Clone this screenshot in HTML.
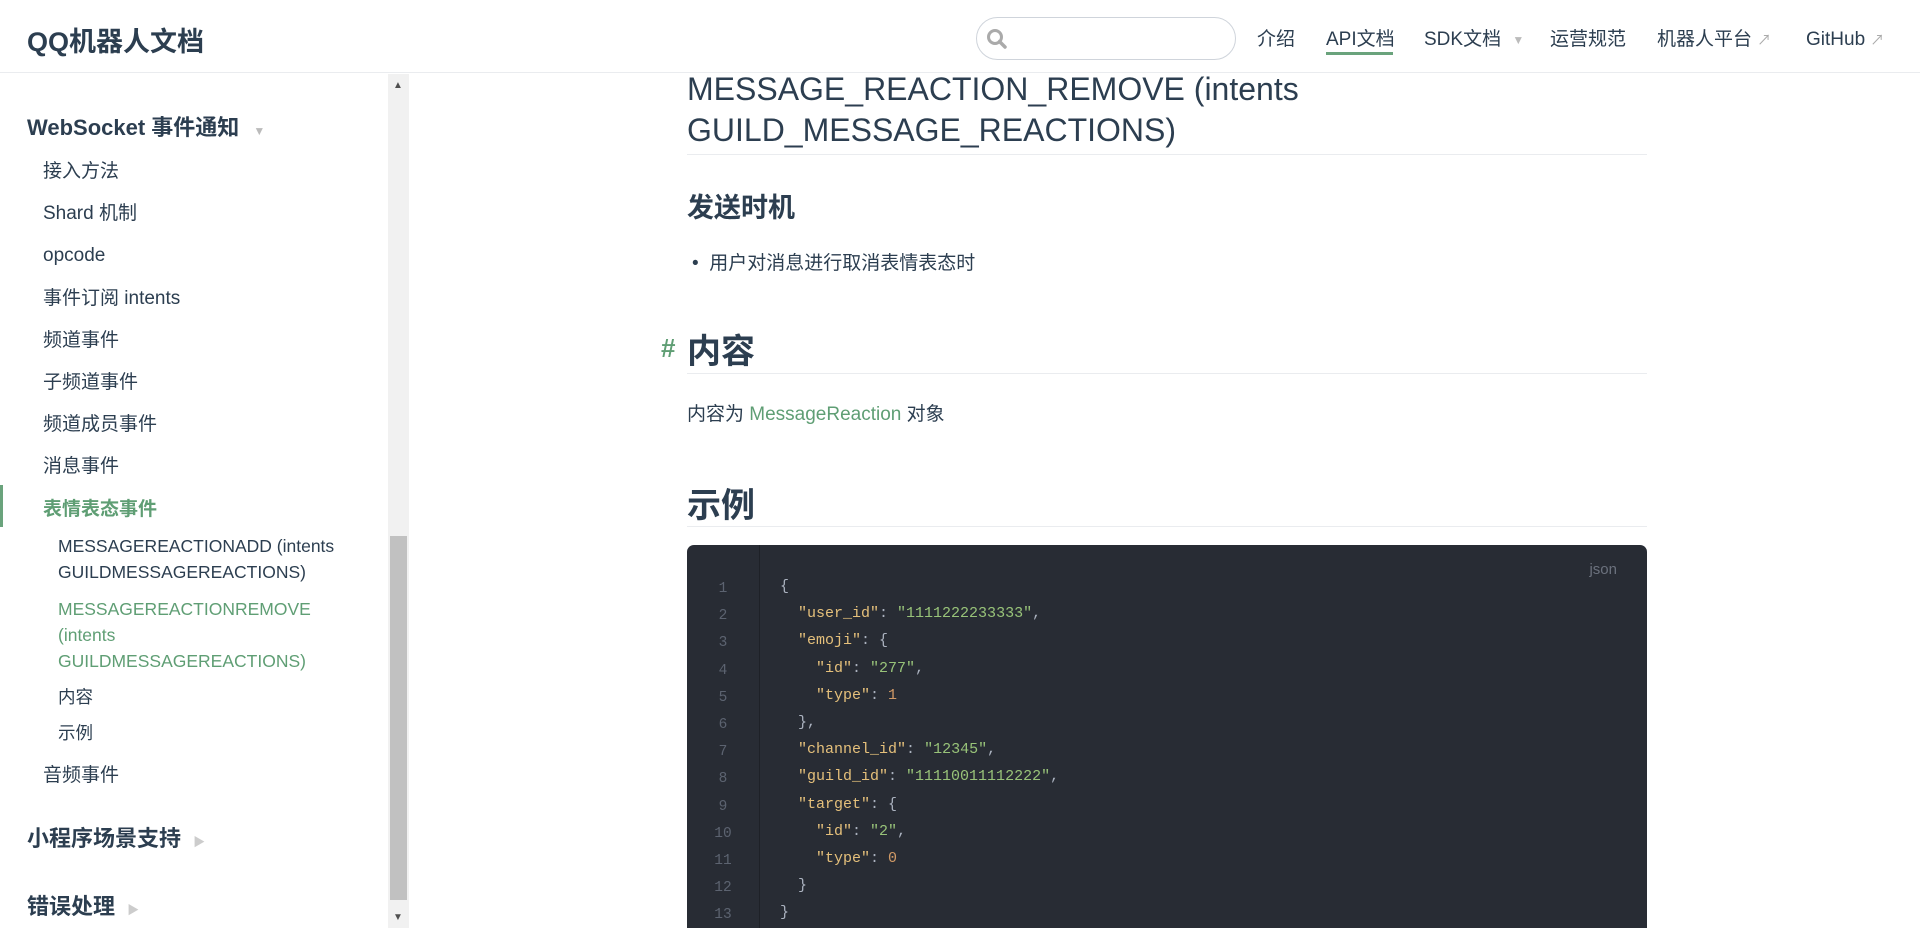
<!DOCTYPE html>
<html><head><meta charset="utf-8"><style>
*{margin:0;padding:0;box-sizing:border-box}
html,body{width:1920px;height:928px;overflow:hidden}
body{background:#fff;font-family:"Liberation Sans","Noto Sans CJK SC",sans-serif;color:#2c3e50;position:relative}
.a{position:absolute;white-space:nowrap}
.hdr{position:absolute;left:0;top:0;width:1920px;height:73px;border-bottom:1px solid #eaecef;background:#fff}
.nav{font-size:19px;color:#2c3e50;top:28px;line-height:24px;height:24px}
.nav span{display:inline-block;line-height:24px;vertical-align:top}
.side{font-size:19px;color:#2c3e50}
.sub{font-size:17.5px;color:#2c3e50;line-height:26px}
.g{color:#5f9e74}
.code{position:absolute;left:687px;top:545px;width:960px;height:383px;background:#282c34;border-radius:7px 7px 0 0;overflow:hidden}
.ln{position:absolute;left:0;width:72px;text-align:center;color:#5c6370;font-family:"Liberation Mono",monospace;font-size:14.5px}
.cl{position:absolute;left:93px;font-family:"Liberation Mono",monospace;font-size:15px;color:#abb2bf}
.k{color:#e5c07b}.s{color:#98c379}.n{color:#d19a66}
</style></head><body>
<div class="hdr"></div>
<div class="a" style="left:27px;top:20px;font-size:27px;font-weight:bold;color:#2c3e50">QQ机器人文档</div>
<div class="a" style="left:976px;top:17px;width:260px;height:43px;border:1.5px solid #cfd4db;border-radius:22px"></div>
<svg class="a" style="left:986px;top:28px" width="22" height="22" viewBox="0 0 22 22"><circle cx="9" cy="9" r="6.5" fill="none" stroke="#aaa" stroke-width="3"/><line x1="13.5" y1="13.5" x2="19" y2="19" stroke="#aaa" stroke-width="3.5" stroke-linecap="round"/></svg>
<div class="a nav" style="left:1257px">介绍</div>
<div class="a nav" style="left:1326px">API文档</div>
<div class="a" style="left:1326px;top:52px;width:67px;height:3px;background:#6aa37c"></div>
<div class="a nav" style="left:1424px">SDK文档 <span style="color:#bbb;font-size:12px;margin-left:6px">▼</span></div>
<div class="a nav" style="left:1550px">运营规范</div>
<div class="a nav" style="left:1657px">机器人平台 <span style="color:#aaa;font-size:14px">↗</span></div>
<div class="a nav" style="left:1806px">GitHub <span style="color:#aaa;font-size:14px">↗</span></div>

<div class="a" style="left:388px;top:74px;width:21px;height:854px;background:#f1f1f1"></div>
<div class="a" style="left:390px;top:536px;width:17px;height:364px;background:#c1c1c1"></div>
<div class="a" style="left:393px;top:80px;font-size:10px;color:#505050">▲</div>
<div class="a" style="left:393px;top:912px;font-size:10px;color:#505050">▼</div>

<div class="a" style="left:27px;top:110px;font-size:22px;font-weight:bold">WebSocket 事件通知 <span style="color:#bbb;font-size:12px;margin-left:8px">▼</span></div>
<div class="a side" style="left:43px;top:156px">接入方法</div>
<div class="a side" style="left:43px;top:198px">Shard 机制</div>
<div class="a side" style="left:43px;top:245px">opcode</div>
<div class="a side" style="left:43px;top:283px">事件订阅 intents</div>
<div class="a side" style="left:43px;top:325px">频道事件</div>
<div class="a side" style="left:43px;top:367px">子频道事件</div>
<div class="a side" style="left:43px;top:409px">频道成员事件</div>
<div class="a side" style="left:43px;top:451px">消息事件</div>
<div class="a" style="left:0;top:485px;width:3px;height:42px;background:#6aa37c"></div>
<div class="a side g" style="left:43px;top:494px;font-weight:bold">表情表态事件</div>
<div class="a sub" style="left:58px;top:533px">MESSAGEREACTIONADD (intents<br>GUILDMESSAGEREACTIONS)</div>
<div class="a sub g" style="left:58px;top:596px">MESSAGEREACTIONREMOVE<br>(intents<br>GUILDMESSAGEREACTIONS)</div>
<div class="a sub" style="left:58px;top:684px">内容</div>
<div class="a sub" style="left:58px;top:720px">示例</div>
<div class="a side" style="left:43px;top:760px">音频事件</div>
<div class="a" style="left:27px;top:821px;font-size:22px;font-weight:bold">小程序场景支持 <span style="color:#ccc;font-size:12px;margin-left:6px">▶</span></div>
<div class="a" style="left:27px;top:889px;font-size:22px;font-weight:bold">错误处理 <span style="color:#ccc;font-size:12px;margin-left:6px">▶</span></div>

<div class="a" style="left:687px;top:69px;font-size:32px;line-height:41px">MESSAGE_REACTION_REMOVE (intents<br>GUILD_MESSAGE_REACTIONS)</div>
<div class="a" style="left:687px;top:154px;width:960px;height:1px;background:#eaecef"></div>
<div class="a" style="left:687px;top:186px;font-size:27px;font-weight:bold">发送时机</div>
<div class="a" style="left:692px;top:248px;font-size:19px">•&nbsp;&nbsp;用户对消息进行取消表情表态时</div>
<div class="a g" style="left:661px;top:333px;font-size:26px;font-weight:bold">#</div>
<div class="a" style="left:687px;top:324px;font-size:34px;font-weight:bold">内容</div>
<div class="a" style="left:687px;top:373px;width:960px;height:1px;background:#eaecef"></div>
<div class="a" style="left:687px;top:399px;font-size:19px">内容为 <span class="g">MessageReaction</span> 对象</div>
<div class="a" style="left:687px;top:478px;font-size:34px;font-weight:bold">示例</div>
<div class="a" style="left:687px;top:526px;width:960px;height:1px;background:#eaecef"></div>

<div class="code">
<div class="a" style="left:72px;top:0;width:1px;height:383px;background:#1e2127"></div>
<div class="a" style="right:30px;top:16px;font-size:15px;color:#6b717d">json</div>
<div class="ln" style="top:31px;line-height:27.2px">1<br>2<br>3<br>4<br>5<br>6<br>7<br>8<br>9<br>10<br>11<br>12<br>13</div>
<div class="cl" style="top:28px;line-height:27.2px;white-space:pre">{
  <span class="k">"user_id"</span>: <span class="s">"1111222233333"</span>,
  <span class="k">"emoji"</span>: {
    <span class="k">"id"</span>: <span class="s">"277"</span>,
    <span class="k">"type"</span>: <span class="n">1</span>
  },
  <span class="k">"channel_id"</span>: <span class="s">"12345"</span>,
  <span class="k">"guild_id"</span>: <span class="s">"11110011112222"</span>,
  <span class="k">"target"</span>: {
    <span class="k">"id"</span>: <span class="s">"2"</span>,
    <span class="k">"type"</span>: <span class="n">0</span>
  }
}</div>
</div>
</body></html>
